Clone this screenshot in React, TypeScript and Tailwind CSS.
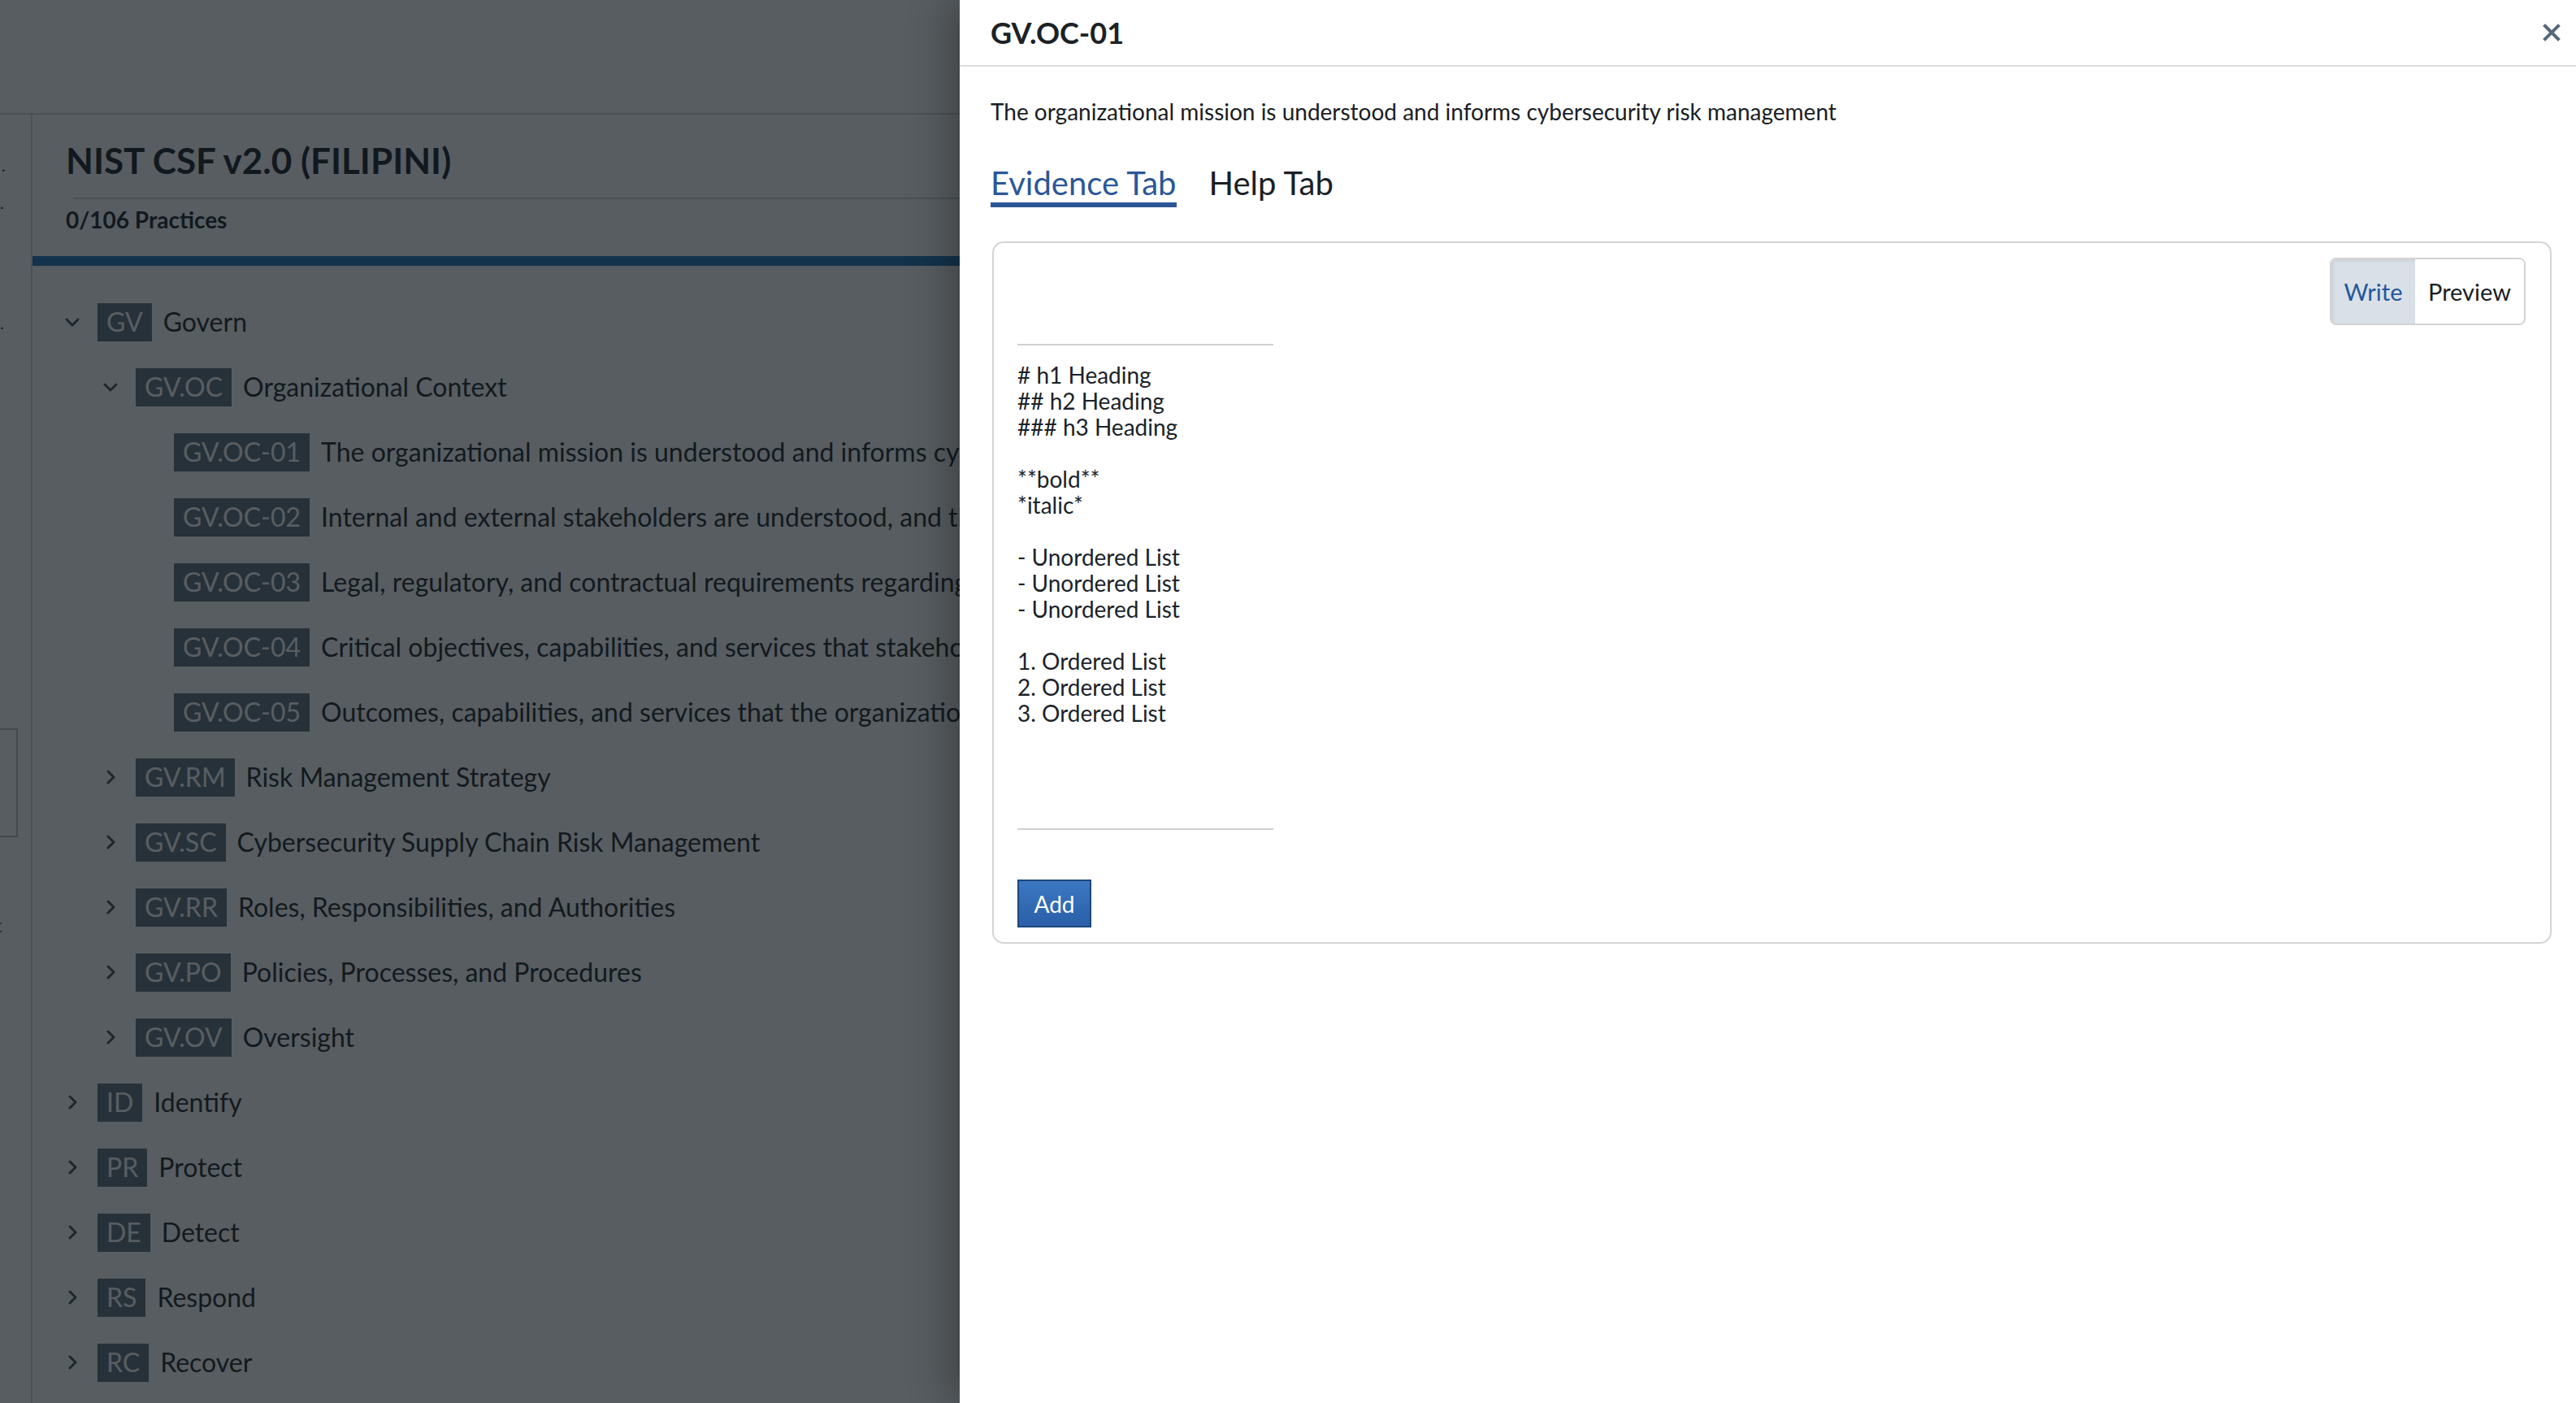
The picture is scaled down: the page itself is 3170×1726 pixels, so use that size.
import React from 'react';

type TreeNode = {
  code: string;
  label: string;
  level: number;
  open?: boolean;
  leaf?: boolean;
};

const tree: TreeNode[] = [
  { code: 'GV', label: 'Govern', level: 0, open: true },
  { code: 'GV.OC', label: 'Organizational Context', level: 1, open: true },
  { code: 'GV.OC-01', label: 'The organizational mission is understood and informs cybersecurity risk management', level: 2, leaf: true },
  { code: 'GV.OC-02', label: 'Internal and external stakeholders are understood, and their needs and expectations regarding cybersecurity risk management are understood and considered', level: 2, leaf: true },
  { code: 'GV.OC-03', label: 'Legal, regulatory, and contractual requirements regarding cybersecurity are understood and managed', level: 2, leaf: true },
  { code: 'GV.OC-04', label: 'Critical objectives, capabilities, and services that stakeholders depend on or expect from the organization are understood and communicated', level: 2, leaf: true },
  { code: 'GV.OC-05', label: 'Outcomes, capabilities, and services that the organization depends on are understood and communicated', level: 2, leaf: true },
  { code: 'GV.RM', label: 'Risk Management Strategy', level: 1 },
  { code: 'GV.SC', label: 'Cybersecurity Supply Chain Risk Management', level: 1 },
  { code: 'GV.RR', label: 'Roles, Responsibilities, and Authorities', level: 1 },
  { code: 'GV.PO', label: 'Policies, Processes, and Procedures', level: 1 },
  { code: 'GV.OV', label: 'Oversight', level: 1 },
  { code: 'ID', label: 'Identify', level: 0 },
  { code: 'PR', label: 'Protect', level: 0 },
  { code: 'DE', label: 'Detect', level: 0 },
  { code: 'RS', label: 'Respond', level: 0 },
  { code: 'RC', label: 'Recover', level: 0 },
];

const markdownSample = `# h1 Heading
## h2 Heading
### h3 Heading

**bold**
*italic*

- Unordered List
- Unordered List
- Unordered List

1. Ordered List
2. Ordered List
3. Ordered List`;

const Chevron = ({ open }: { open?: boolean }) =>
  open ? (
    <svg width="18" height="11" viewBox="0 0 18 11" fill="none">
      <path d="M2 2l7 7 7-7" stroke="#3a4a55" strokeWidth="3" strokeLinecap="round" strokeLinejoin="round" />
    </svg>
  ) : (
    <svg width="11" height="18" viewBox="0 0 11 18" fill="none">
      <path d="M2 2l7 7-7 7" stroke="#3a4a55" strokeWidth="3" strokeLinecap="round" strokeLinejoin="round" />
    </svg>
  );

const TreeRow = ({ node }: { node: TreeNode }) => {
  const indent = ['pl-[39px]', 'pl-[86px]', 'pl-[133px]'][node.level];
  return (
    <div className={`h-[80px] flex items-center whitespace-nowrap ${indent}`}>
      <div className="w-[20px] flex items-center justify-center shrink-0">
        {!node.leaf && <Chevron open={node.open} />}
      </div>
      <span className="ml-[21px] shrink-0 h-[47px] px-[11px] flex items-center bg-[#5a6b7b] text-white text-[32px]">
        {node.code}
      </span>
      <span className="ml-[14px] text-[32px] text-[#141e23]">{node.label}</span>
    </div>
  );
};

export default function App() {
  return (
    <div className="relative w-[3170px] h-[1726px] overflow-hidden bg-white font-['Lato',sans-serif]">
      {/* page behind the drawer */}
      <div className="flex flex-col h-full">
        <div className="h-[141px] shrink-0 border-b-2 border-[#d1d5db]" />
        <div className="flex flex-1 min-h-0">
          <aside className="w-[40px] shrink-0 border-r-2 border-[#d1d5db] flex flex-col overflow-hidden text-[#141e23]">
            <span className="mt-[52px] pl-[2px] text-[20px] leading-[20px]">.</span>
            <span className="mt-[26px] pl-[0px] text-[20px] leading-[20px]">.</span>
            <span className="mt-[128px] pl-[0px] text-[20px] leading-[20px]">.</span>
            <div className="mt-[489px] w-[22px] h-[134px] border-2 border-l-0 border-[#b8bec5]" />
            <span className="mt-[96px] -ml-[6px] text-[24px] leading-[24px] text-[#5a646c]">t</span>
          </aside>
          <main className="flex-1 min-w-0">
            <h1 className="pl-[41px] pt-[30px] h-[102px] text-[44px] font-bold text-[#131d22] leading-[52px]">
              NIST CSF v2.0 (FILIPINI)
            </h1>
            <div className="ml-[50px] border-t-2 border-[#d1d5db]" />
            <div className="pl-[41px] pt-[8px] h-[70px] text-[28px] leading-[34px] font-bold text-[#131d22]">0/106 Practices</div>
            <div className="h-[12px] bg-[#1a72ba]" />
            <div className="pt-[29px]">
              {tree.map((node) => (
                <TreeRow key={node.code} node={node} />
              ))}
            </div>
          </main>
        </div>
      </div>

      {/* dim overlay */}
      <div className="absolute inset-0 bg-[rgba(17,24,30,0.7)]" />

      {/* drawer */}
      <div className="absolute top-0 right-0 bottom-0 w-[1989px] bg-white flex flex-col shadow-[-12px_0_48px_rgba(0,0,0,0.3)]">
        <div className="h-[82px] shrink-0 flex items-center justify-between pl-[38px] pr-[18px] border-b-2 border-[#dcdcdc]">
          <h2 className="text-[36px] font-bold text-[#1c2227]">GV.OC-01</h2>
          <button className="w-[24px] h-[24px] flex items-center justify-center">
            <svg width="22" height="22" viewBox="0 0 22 22" fill="none">
              <path d="M3 3l16 16M19 3L3 19" stroke="#56697b" strokeWidth="4" strokeLinecap="square" />
            </svg>
          </button>
        </div>
        <div className="pl-[38px] pr-[30px]">
          <p className="mt-[39px] text-[28px] leading-[32px] text-[#1a2025]">
            The organizational mission is understood and informs cybersecurity risk management
          </p>
          <div className="mt-[48px] flex gap-[40px] text-[40px] leading-[48px]">
            <button className="text-[#2b5797] border-b-[6px] border-[#2b5797]">Evidence Tab</button>
            <button className="text-[#1a2025] border-b-[6px] border-transparent">Help Tab</button>
          </div>
          <div className="mt-[42px] ml-[2px] border-2 border-[#d4d4d4] rounded-[14px] pt-[18px] pb-[18px] pl-[29px] pr-[30px]">
            <div className="flex justify-end">
              <div className="flex h-[83px] border-2 border-[#d3d3d3] rounded-[8px] overflow-hidden text-[29px]">
                <button className="w-[103px] bg-[#d9e0e7] text-[#23579a] shadow-[inset_2px_2px_4px_rgba(0,0,0,0.08)]">Write</button>
                <button className="w-[134px] bg-white text-[#1a1f24]">Preview</button>
              </div>
            </div>
            <div className="mt-[23px] w-[315px] h-[598px] border-y-2 border-[#d0d0d0] pt-[20px] whitespace-pre text-[28px] leading-[32px] text-[#1b232a]">
              {markdownSample}
            </div>
            <button className="mt-[61px] w-[91px] h-[59px] border-2 border-[#1f477d] bg-gradient-to-b from-[#3d78c2] to-[#2a5ea8] text-white text-[28px]">
              Add
            </button>
          </div>
        </div>
      </div>
    </div>
  );
}
